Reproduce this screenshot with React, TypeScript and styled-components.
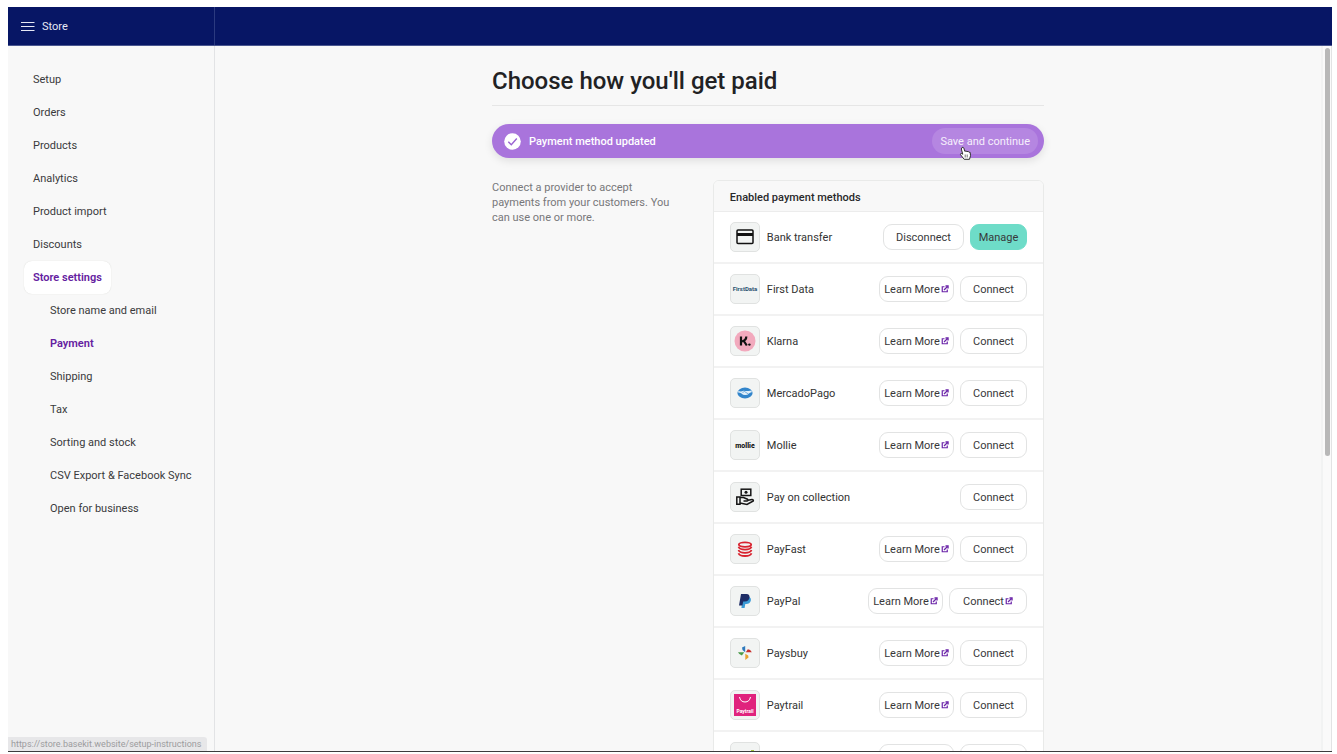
import React from "react";
import styled, { createGlobalStyle, css } from "styled-components";

const Global = createGlobalStyle`
  * { box-sizing: border-box; }
  body { margin: 0; background: #fff; font-family: Roboto, "Liberation Sans", sans-serif; font-size: 11px; color: #333; }
  button { font-family: inherit; cursor: pointer; }
`;

const Frame = styled.div`
  height: 100vh;
  padding: 7px 5px 2px 8px;
`;
const Shell = styled.div`
  position: relative;
  height: 100%;
  display: flex;
  flex-direction: column;
  overflow: hidden;
  background: #f8f8f8;
  border-bottom: 1px solid #3c3c3e;
`;
const TopBar = styled.header`
  flex: none;
  display: flex;
  height: 39px;
  background: #071665;
  border-bottom: 1px solid #4a5790;
`;
const Brand = styled.div`
  width: 207px;
  display: flex;
  align-items: center;
  padding-left: 13px;
  gap: 7px;
  border-right: 1px solid #2b3a7f;
  color: #e6e8f4;
`;
const MenuButton = styled.button`
  display: flex;
  padding: 0;
  border: 0;
  background: none;
  color: #e6e8f4;
`;
const Body = styled.div`
  flex: 1;
  min-height: 0;
  display: flex;
`;
const Sidebar = styled.nav`
  flex: none;
  width: 207px;
  border-right: 1px solid #e2e3e5;
  padding: 17px 16px;
`;
const NavList = styled.ul`
  list-style: none;
  margin: 0;
  padding: 0;
`;
const NavLink = styled.a<{ $active?: boolean; $sub?: boolean; $boxed?: boolean }>`
  display: block;
  width: fit-content;
  height: 33px;
  line-height: 33px;
  padding: 0 9px;
  margin-left: ${(p) => (p.$sub ? "17px" : "0")};
  white-space: nowrap;
  text-decoration: none;
  color: #3a3a3c;
  ${(p) => p.$active && css`color: #6420a0; font-weight: 600;`}
  ${(p) => p.$boxed && css`background: #fff; border-radius: 8px; box-shadow: 0 0 1px #cfd0cc;`}
`;
const Main = styled.main`
  flex: 1;
  min-width: 0;
  overflow: hidden;
  padding: 20px 24px 0;
`;
const Content = styled.div`
  max-width: 552px;
  margin: 0 auto;
`;
const Title = styled.h1`
  margin: 0;
  padding-bottom: 8px;
  line-height: 31px;
  font-size: 24px;
  font-weight: 500;
  color: #222224;
  border-bottom: 1px solid #e6e6e6;
`;
const Banner = styled.div`
  display: flex;
  align-items: center;
  gap: 8px;
  height: 34px;
  margin: 18px 0 22px;
  padding: 0 6px 0 12px;
  border-radius: 17px;
  background: #a974dc;
  box-shadow: 0 3px 8px rgba(0, 0, 0, 0.1);
  color: #fff;
  font-weight: 500;
`;
const SaveButton = styled.button`
  position: relative;
  margin-left: auto;
  height: 26px;
  padding: 0 8px;
  border: 0;
  border-radius: 13px;
  background: #b586e1;
  color: #f6effc;
  font-size: 11px;
`;
const Pointer = styled.svg`
  position: absolute;
  left: 27px;
  top: 18px;
`;
const Columns = styled.div`
  display: grid;
  grid-template-columns: 2fr 3fr;
  align-items: start;
`;
const Intro = styled.p`
  margin: 0;
  max-width: 184px;
  line-height: 15px;
  color: #77777a;
`;
const Card = styled.section`
  border: 1px solid #e9eae9;
  border-radius: 6px 6px 0 0;
  background: #fff;
  overflow: hidden;
`;
const CardTitle = styled.h2`
  margin: 0;
  height: 31px;
  padding: 0 16px;
  line-height: 34px;
  font-size: 11px;
  font-weight: 500;
  color: #29292b;
  background: #f8f8f8;
  border-bottom: 1px solid #ececec;
`;
const Method = styled.li`
  display: flex;
  align-items: center;
  gap: 6px;
  height: 52px;
  padding: 0 16px;
  border-bottom: 2px solid #f2f2f2;
`;
const Tile = styled.span`
  flex: none;
  display: flex;
  align-items: center;
  justify-content: center;
  width: 30px;
  height: 30px;
  border: 1px solid #e0e2e1;
  border-radius: 5px;
  background: #f2f4f3;
`;
const Name = styled.span`
  flex: 1;
  margin-left: 1px;
`;
const Action = styled.button<{ $width: number; $primary?: boolean }>`
  display: flex;
  align-items: center;
  justify-content: center;
  gap: 1px;
  height: 26px;
  padding: 0 4px;
  min-width: ${(p) => p.$width}px;
  border: 1px solid ${(p) => (p.$primary ? "#6edcc8" : "#e2e3e3")};
  border-radius: 9px;
  background: ${(p) => (p.$primary ? "#6edcc8" : "#fff")};
  color: #38383a;
  font-size: 11px;
  white-space: nowrap;
`;
const StatusBar = styled.div`
  position: absolute;
  left: 0;
  bottom: 0;
  height: 14px;
  padding: 0 6px 0 3px;
  line-height: 14px;
  font-size: 9px;
  border-top-right-radius: 3px;
  background: #e7e7e9;
  color: #9c9c9e;
`;
const Gutter = styled.div`
  flex: none;
  width: 11px;
  padding: 2px 1px 0 2px;
  border-left: 2px solid #f2f3f3;
  border-right: 1px solid #e2e3e4;
  background: #fafafa;
`;
const Thumb = styled.div`
  height: 58%;
  border-radius: 3px;
  background: #b8b8b8;
`;

const External = () => (
  <svg width="8" height="8" viewBox="0 0 16 16" fill="none" stroke="#6a23a8" strokeWidth="2.4" aria-hidden="true">
    <path d="M7 3.500H2.500v10h10V9" />
    <path d="M6 10l7-7" />
    <path d="M9 2h5v5" strokeWidth="2.8" />
  </svg>
);

const logos: Record<string, React.ReactNode> = {
  bank: (
    <svg width="18" height="16" viewBox="0 0 18 16">
      <rect x="1" y="1" width="16" height="13.500" rx="1" fill="none" stroke="#111" strokeWidth="1.500" />
      <path d="M1 4h16v3H1z" fill="#111" />
    </svg>
  ),
  first: (
    <svg width="28" height="10" viewBox="0 0 28 10">
      <text x="14" y="7" textAnchor="middle" fontSize="6" fontWeight="700" fill="#2a5270">FirstData</text>
    </svg>
  ),
  klarna: (
    <svg width="22" height="22" viewBox="0 0 22 22">
      <circle cx="11" cy="11" r="10.5" fill="#f2a9bd" />
      <path d="M7 6.5v9M12.3 6.5c0 2.600-1.500 4.200-4.200 5M9.500 10.500l3.300 5" fill="none" stroke="#111" strokeWidth="2.200" />
      <circle cx="15.400" cy="14.600" r="1.200" fill="#111" />
    </svg>
  ),
  mercado: (
    <svg width="16" height="12" viewBox="0 0 16 12">
      <ellipse cx="8" cy="6" rx="7.600" ry="5.400" fill="#3285cb" />
      <path d="M1.300 4q3 1 5.200-.3 3 .6 5 .3 1.800 0 3.200-.4v1.600q-2 .5-2.700 1.200-1.500 1.800-3.800 1.700Q6 8.200 4.500 6.500 3 5.500 1.100 5.400z" fill="#e0eff9" />
      <path d="M5.500 5.500l2-1 4 2.600" stroke="#3285cb" strokeWidth=".6" fill="none" />
    </svg>
  ),
  mollie: (
    <svg width="24" height="10" viewBox="0 0 24 10">
      <text x="12" y="8" textAnchor="middle" fontSize="7" fontWeight="800" fill="#111">mollie</text>
    </svg>
  ),
  collect: (
    <svg width="20" height="18" viewBox="0 0 20 18" fill="none" stroke="#151515" strokeWidth="1.500">
      <rect x="6.200" y="1.200" width="9.600" height="6.300" />
      <circle cx="11" cy="4.300" r="1.500" fill="#151515" stroke="none" />
      <path d="M1.800 9h3.200v7.200H1.800zM5 9.500h3.500l4 1.700q1.200 1.300-.5 1.900H8.500M13 12.200l4-.8q1.700.2 1.300 1.500L12 16.500 5 15" />
    </svg>
  ),
  payfast: (
    <svg width="16" height="16" viewBox="0 0 16 16" fill="none" stroke="#d8232f" strokeWidth="1.800">
      <ellipse cx="8" cy="3.600" rx="6.200" ry="2.300" />
      <path d="M1.500 5.800q1 2.800 6.500 2.800t6.500-2.800M1.500 9q1 2.800 6.500 2.800t6.500-2.800M1.500 12.200q1 2.800 6.500 2.800t6.500-2.800" />
    </svg>
  ),
  paypal: (
    <svg width="14" height="16" viewBox="0 0 14 16">
      <path d="M5 4h6.200q2.300 1.200 1.500 4-1 3-4.400 3h-1l-.7 4H3.400z" fill="#3b9bd6" />
      <path d="M3 1h5.500q3.500.2 3 3.800-.7 3.700-4.700 3.700H5.200l-.8 4H1z" fill="#1e2d66" />
    </svg>
  ),
  paysbuy: (
    <svg width="16" height="16" viewBox="0 0 16 16">
      <path d="M5 2.500L8.200 1v6.300L5.500 5z" fill="#2f79bd" />
      <path d="M14.800 7.300H8.800l2-3q2.800.2 4 3z" fill="#c9302c" />
      <path d="M11.500 12.500L8.300 15V8.800l2.900 1.700z" fill="#e9a12f" />
      <path d="M1 7.300h6.200l-2.300 3.200Q2.200 9.800 1 7.300z" fill="#4a9b4a" />
    </svg>
  ),
  paytrail: (
    <svg width="22" height="22" viewBox="0 0 22 22">
      <rect x="0" y="0" width="22" height="22" fill="#e0237d" />
      <path d="M5.500 3q1 5 5.500 5t5.500-5" fill="none" stroke="#fff" strokeWidth="1" />
      <text x="11" y="19" textAnchor="middle" fontSize="5" fontWeight="700" fill="#fff">Paytrail</text>
    </svg>
  ),
  payu: (
    <svg width="22" height="22" viewBox="0 0 22 22">
      <path d="M17 4h3v3h-3zM14 8v5q0 2 2 2t2-2V8" fill="#a5c83b" />
    </svg>
  ),
};

type Provider = { name: string; logo: string; kind?: "enabled" | "plain" | "external" };
const providers: Provider[] = [
  { name: "Bank transfer", logo: "bank", kind: "enabled" },
  { name: "First Data", logo: "first" },
  { name: "Klarna", logo: "klarna" },
  { name: "MercadoPago", logo: "mercado" },
  { name: "Mollie", logo: "mollie" },
  { name: "Pay on collection", logo: "collect", kind: "plain" },
  { name: "PayFast", logo: "payfast" },
  { name: "PayPal", logo: "paypal", kind: "external" },
  { name: "Paysbuy", logo: "paysbuy" },
  { name: "Paytrail", logo: "paytrail" },
  { name: "PayU", logo: "payu" },
];

const mainLinks = ["Setup", "Orders", "Products", "Analytics", "Product import", "Discounts", "Store settings"];
const subLinks = ["Store name and email", "Payment", "Shipping", "Tax", "Sorting and stock", "CSV Export & Facebook Sync", "Open for business"];

function ProviderRow({ name, logo, kind }: Provider) {
  return (
    <Method>
      <Tile>{logos[logo]}</Tile>
      <Name>{name}</Name>
      {kind === "enabled" ? (
        <>
          <Action $width={81}>Disconnect</Action>
          <Action $width={57} $primary>Manage</Action>
        </>
      ) : (
        <>
          {kind !== "plain" && <Action $width={75}>Learn More<External /></Action>}
          <Action $width={kind === "external" ? 78 : 67}>Connect{kind === "external" && <External />}</Action>
        </>
      )}
    </Method>
  );
}

export default function App() {
  return (
    <Frame>
      <Global />
      <Shell>
        <TopBar>
          <Brand>
            <MenuButton aria-label="Menu">
              <svg width="14" height="11" viewBox="0 0 14 11" stroke="currentColor" strokeWidth="1">
                <path d="M0 1.500h13.500M0 5.500h13.500M0 9.500h13.500" />
              </svg>
            </MenuButton>
            Store
          </Brand>
        </TopBar>
        <Body>
          <Sidebar>
            <NavList>
              {mainLinks.map((l) => (
                <li key={l}>
                  <NavLink href="#" $active={l === "Store settings"} $boxed={l === "Store settings"}>{l}</NavLink>
                </li>
              ))}
              {subLinks.map((l) => (
                <li key={l}>
                  <NavLink href="#" $sub $active={l === "Payment"}>{l}</NavLink>
                </li>
              ))}
            </NavList>
          </Sidebar>
          <Main>
            <Content>
              <Title>Choose how you'll get paid</Title>
              <Banner>
                <svg width="17" height="17" viewBox="0 0 17 17" aria-hidden="true">
                  <circle cx="8.500" cy="8.500" r="8.300" fill="#fff" />
                  <path d="M4.300 8.800l3 3 5.500-6.300" fill="none" stroke="#9a62d2" strokeWidth="1.400" />
                </svg>
                Payment method updated
                <SaveButton>
                  Save and continue
                  <Pointer width="13" height="15" viewBox="0 0 13 15" aria-hidden="true">
                    <path d="M3 1.500q1.200-.8 1.800.5l1 3.300 1.200-.3 1 .6 1.200-.2.8.8 1.200.2.300 3.300-1 3.600H5.200L1.500 8.700q-.2-1.500 1.300-1.200l1 .8L2.300 3z" fill="#fff" stroke="#333" strokeWidth="1" />
                    <path d="M6.200 8.500v3M8.200 8.500v3" stroke="#333" strokeWidth=".7" />
                  </Pointer>
                </SaveButton>
              </Banner>
              <Columns>
                <Intro>Connect a provider to accept payments from your customers. You can use one or more.</Intro>
                <Card>
                  <CardTitle>Enabled payment methods</CardTitle>
                  <NavList>
                    {providers.map((p) => (
                      <ProviderRow key={p.name} {...p} />
                    ))}
                  </NavList>
                </Card>
              </Columns>
            </Content>
          </Main>
          <Gutter>
            <Thumb />
          </Gutter>
        </Body>
        <StatusBar>https://store.basekit.website/setup-instructions</StatusBar>
      </Shell>
    </Frame>
  );
}
